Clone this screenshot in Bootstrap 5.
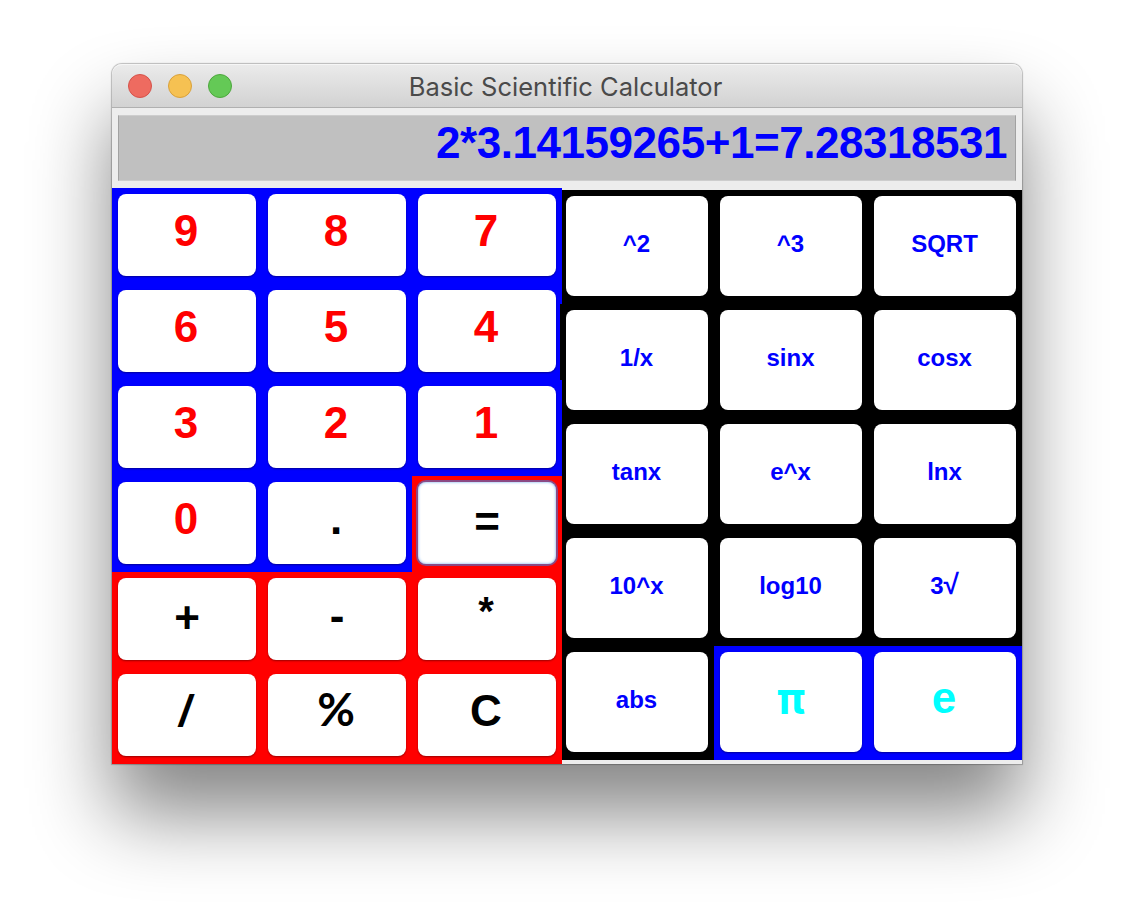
<!DOCTYPE html>
<html lang="en">
<head>
<meta charset="utf-8">
<meta name="viewport" content="width=device-width, initial-scale=1">
<title>Basic Scientific Calculator</title>
<link href="https://cdn.jsdelivr.net/npm/bootstrap@5.3.0/dist/css/bootstrap.min.css" rel="stylesheet">
<style>
body{background:#fff;font-family:"Liberation Sans",Arial,sans-serif;padding:64px 112px 0;height:924px;overflow:hidden}
.calc{width:910px;height:700px;background:#ededed;border-radius:10px 10px 0 0;box-shadow:0 0 1px 1px rgba(0,0,0,.24),0 50px 80px rgba(0,0,0,.48)}
.titlebar{height:44px;padding:0 16px;background:linear-gradient(#ebebeb,#d2d2d2);border-bottom:1px solid #b0b0b0;border-radius:10px 10px 0 0;box-shadow:inset 0 1px #f6f6f6}
.light{width:24px;height:24px;border-radius:50%;border:1px solid}
.l-red{background:#ee6b60;border-color:#d5524a}
.l-yellow{background:#f6c152;border-color:#d9a13b}
.l-green{background:#64c956;border-color:#4da73d}
.caption{font-family:Inter,sans-serif;font-size:25.5px;line-height:44px;color:#4a4a4a;padding:2px 3px 0 0}
.screen{height:66px;margin:7px 6px;background:#c0c0c0;border:1px solid #cdcdcd;border-left-color:#a2a2a2;border-right-color:#a2a2a2;color:#00f;font-size:44px;line-height:44px;letter-spacing:-.46px;padding:5px 8px 0 0}
.pads{height:576px}
.keys{display:grid;grid-template-columns:repeat(3,1fr)}
.keys-main{width:450px;grid-auto-rows:96px}
.keys-sci{width:460px;margin-top:2px;grid-template-columns:152px 154px 154px;grid-auto-rows:114px}
.slot{padding:6px 6px 8px}
.keys-sci .slot:nth-child(3n+1){padding-left:4px}
.on-blue{background:#00f}
.on-red{background:#f00}
.on-black{background:#000}
.seam{background:linear-gradient(#000,#000) right bottom/2px 76px no-repeat #00f}
.key,.key:hover{width:100%;height:100%;background:#fff;border:0;border-radius:8px;font-weight:700;font-size:44px;line-height:44px;padding:0 2px 8px 0;color:#000;box-shadow:0 1px 2px rgba(0,0,0,.4)}
.num,.num:hover{color:#f00}
.fn,.fn:hover{font-size:24px;line-height:24px;padding:0 1px 5px 0;color:#00f}
.const,.const:hover{color:#0ff;padding-bottom:8px}
.low,.low:hover{padding:0 0 2px}
.minus,.minus:hover{padding:0 0 6px}
.star,.star:hover{font-size:40px;padding-bottom:16px}
.slant span{display:inline-block;transform:skewX(-10deg)}
.percent,.percent:hover{font-family:Lato,sans-serif;font-size:46px;padding-bottom:12px}
.pi,.pi:hover{font-family:Inter,sans-serif;padding-right:0}
.root{font-size:28px;line-height:20px}
.focused,.focused:hover{box-shadow:0 0 0 2px #8a4a85,inset 0 0 3px #6aa6ee}
</style>
</head>
<body>
<main class="calc">
  <header class="titlebar d-flex align-items-center position-relative">
    <div class="d-flex" style="gap:16px"><span class="light l-red"></span><span class="light l-yellow"></span><span class="light l-green"></span></div>
    <div class="caption position-absolute start-0 w-100 text-center">Basic Scientific Calculator</div>
  </header>
  <div class="screen fw-bold text-end">2*3.14159265+1=7.28318531</div>
  <div class="pads d-flex align-items-start">
    <div class="keys keys-main">
      <div class="slot on-blue"><button class="btn key num">9</button></div>
      <div class="slot on-blue"><button class="btn key num">8</button></div>
      <div class="slot on-blue"><button class="btn key num">7</button></div>
      <div class="slot on-blue"><button class="btn key num">6</button></div>
      <div class="slot on-blue"><button class="btn key num">5</button></div>
      <div class="slot seam"><button class="btn key num">4</button></div>
      <div class="slot on-blue"><button class="btn key num">3</button></div>
      <div class="slot on-blue"><button class="btn key num">2</button></div>
      <div class="slot on-blue"><button class="btn key num">1</button></div>
      <div class="slot on-blue"><button class="btn key num">0</button></div>
      <div class="slot on-blue"><button class="btn key">.</button></div>
      <div class="slot on-red"><button class="btn key low focused">=</button></div>
      <div class="slot on-red"><button class="btn key low">+</button></div>
      <div class="slot on-red"><button class="btn key minus">-</button></div>
      <div class="slot on-red"><button class="btn key star">*</button></div>
      <div class="slot on-red"><button class="btn key slant"><span>/</span></button></div>
      <div class="slot on-red"><button class="btn key percent">%</button></div>
      <div class="slot on-red"><button class="btn key">C</button></div>
    </div>
    <div class="keys keys-sci">
      <div class="slot on-black"><button class="btn key fn">^2</button></div>
      <div class="slot on-black"><button class="btn key fn">^3</button></div>
      <div class="slot on-black"><button class="btn key fn">SQRT</button></div>
      <div class="slot on-black"><button class="btn key fn">1/x</button></div>
      <div class="slot on-black"><button class="btn key fn">sinx</button></div>
      <div class="slot on-black"><button class="btn key fn">cosx</button></div>
      <div class="slot on-black"><button class="btn key fn">tanx</button></div>
      <div class="slot on-black"><button class="btn key fn">e^x</button></div>
      <div class="slot on-black"><button class="btn key fn">lnx</button></div>
      <div class="slot on-black"><button class="btn key fn">10^x</button></div>
      <div class="slot on-black"><button class="btn key fn">log10</button></div>
      <div class="slot on-black"><button class="btn key fn">3<span class="root">√</span></button></div>
      <div class="slot on-black"><button class="btn key fn">abs</button></div>
      <div class="slot on-blue"><button class="btn key const pi">π</button></div>
      <div class="slot on-blue"><button class="btn key const">e</button></div>
    </div>
  </div>
</main>
<script src="https://cdn.jsdelivr.net/npm/bootstrap@5.3.0/dist/js/bootstrap.bundle.min.js"></script>
</body>
</html>
